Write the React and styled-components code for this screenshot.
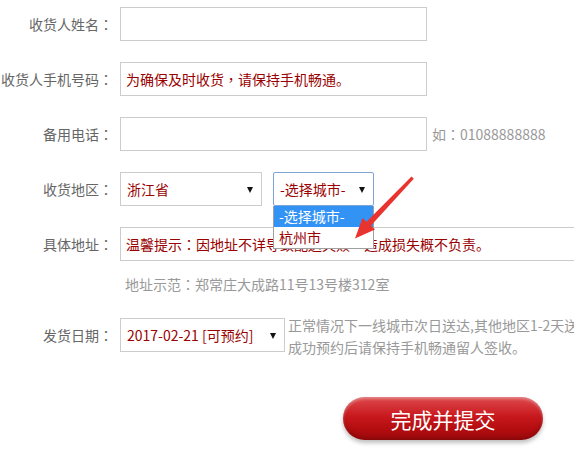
import React from 'react';
import styled, { createGlobalStyle } from 'styled-components';

const GlobalStyle = createGlobalStyle`
  html, body {
    margin: 0;
    padding: 0;
    background: #fff;
    overflow: hidden;
  }
  body {
    font-family: "Noto Sans CJK SC", "Noto Sans", sans-serif;
  }
`;

// centred full-width punctuation, as on the original page
const P = styled.span`
  font-family: "Noto Sans CJK TC", "Noto Sans CJK SC", sans-serif;
`;

const App = () => {
  return (
    <Page>
      <GlobalStyle />
      <Form>
        <Row>
          <Label>收货人姓名<P>：</P></Label>
          <TextBox width={307} />
        </Row>
        <Row>
          <Label>收货人手机号码<P>：</P></Label>
          <TextBox width={307}>为确保及时收货<P>，</P>请保持手机畅通。</TextBox>
        </Row>
        <Row>
          <Label>备用电话<P>：</P></Label>
          <TextBox width={307} />
          <Aside>如<P>：</P>01088888888</Aside>
        </Row>
        <Row>
          <Label>收货地区<P>：</P></Label>
          <Select width={142}>
            浙江省
            <Caret />
          </Select>
          <CityWrap>
            <Select width={101} focused>
              -选择城市-
              <Caret />
            </Select>
            <Options>
              <Option active>-选择城市-</Option>
              <Option>杭州市</Option>
            </Options>
          </CityWrap>
        </Row>
        <Row>
          <Label>具体地址<P>：</P></Label>
          <TextBox width={470}>
            温馨提示<P>：</P>因地址不详导致配送失败<P>，</P>造成损失概不负责。
          </TextBox>
        </Row>
        <HintRow>地址示范<P>：</P>郑常庄大成路11号13号楼312室</HintRow>
        <Row align="flex-start">
          <Label>发货日期<P>：</P></Label>
          <Select width={165}>
            2017-02-21 [可预约]
            <Caret />
          </Select>
          <Note>
            正常情况下一线城市次日送达,其他地区1-2天送达
            <br />
            成功预约后请保持手机畅通留人签收。
          </Note>
        </Row>
        <SubmitRow>
          <SubmitButton>完成并提交</SubmitButton>
        </SubmitRow>
      </Form>
      <Pointer width="80" height="80" viewBox="0 0 80 80">
        <polygon
          points="66.5,1.5 68.8,3.8 26,50.5 30,54.5 10,63.5 17.5,43 21.5,46.8"
          fill="#e8332f"
        />
      </Pointer>
    </Page>
  );
};

export default App;

const Page = styled.div`
  position: relative;
  width: 574px;
  height: 453px;
  overflow: hidden;
`;

const Form = styled.div`
  display: flex;
  flex-direction: column;
  padding-top: 7px;
`;

const Row = styled.div`
  display: flex;
  align-items: ${(p) => p.align || 'center'};
  height: 34px;
  margin-bottom: 21px;
  white-space: nowrap;
`;

const Label = styled.div`
  width: 113px;
  flex-shrink: 0;
  margin-right: 7px;
  text-align: right;
  font-size: 14px;
  color: #666;
  line-height: 34px;
`;

const TextBox = styled.div`
  box-sizing: border-box;
  width: ${(p) => p.width}px;
  flex-shrink: 0;
  height: 34px;
  border: 1px solid #ccc;
  padding: 0 5px;
  font-size: 14px;
  line-height: 32px;
  color: #900;
  background: #fff;
`;

const Aside = styled.span`
  margin-left: 5px;
  font-size: 14px;
  color: #999;
`;

const Select = styled.div`
  position: relative;
  box-sizing: border-box;
  width: ${(p) => p.width}px;
  flex-shrink: 0;
  height: 34px;
  border: 1px solid ${(p) => (p.focused ? '#7fa3d6' : '#ccc')};
  border-radius: ${(p) => (p.focused ? '2px' : '0')};
  padding: 0 6px;
  font-size: 14px;
  line-height: 32px;
  color: #900;
  background: #fff;
`;

const Caret = styled.span`
  position: absolute;
  right: 8px;
  top: 14px;
  width: 0;
  height: 0;
  border-left: 3.5px solid transparent;
  border-right: 3.5px solid transparent;
  border-top: 6px solid #111;
`;

const CityWrap = styled.div`
  position: relative;
  margin-left: 11px;
`;

const Options = styled.div`
  position: absolute;
  left: 0;
  top: 34px;
  z-index: 2;
  box-sizing: border-box;
  width: 101px;
  border: 1px solid #a0a0a0;
  border-top: none;
  background: #fff;
`;

const Option = styled.div`
  height: 21px;
  padding: 0 5px;
  font-size: 14px;
  line-height: 21px;
  color: ${(p) => (p.active ? '#fff' : '#900')};
  background: ${(p) => (p.active ? '#3393f5' : '#fff')};
`;

const HintRow = styled.div`
  margin-top: -14px;
  padding-left: 125px;
  height: 50px;
  font-size: 14px;
  line-height: 32px;
  color: #999;
  white-space: nowrap;
`;

const Note = styled.div`
  margin-left: 3px;
  margin-top: -4px;
  font-size: 14px;
  line-height: 22px;
  color: #999;
  white-space: nowrap;
`;

const SubmitRow = styled.div`
  display: flex;
  padding-left: 343px;
  margin-top: 24px;
`;

const SubmitButton = styled.button`
  width: 200px;
  height: 43px;
  border: none;
  border-radius: 22px;
  font-family: "Noto Sans CJK SC", sans-serif;
  font-size: 21px;
  color: #fff;
  background: linear-gradient(to bottom, #de4a4d 0%, #c8181d 45%, #b30d10 75%, #9e0a0c 100%);
  box-shadow:
    inset 0 2px 3px rgba(255, 255, 255, 0.35),
    inset 0 -2px 4px rgba(80, 0, 0, 0.35),
    0 3px 4px rgba(0, 0, 0, 0.25);
  cursor: pointer;
`;

const Pointer = styled.svg`
  position: absolute;
  left: 345px;
  top: 175px;
  z-index: 3;
`;
